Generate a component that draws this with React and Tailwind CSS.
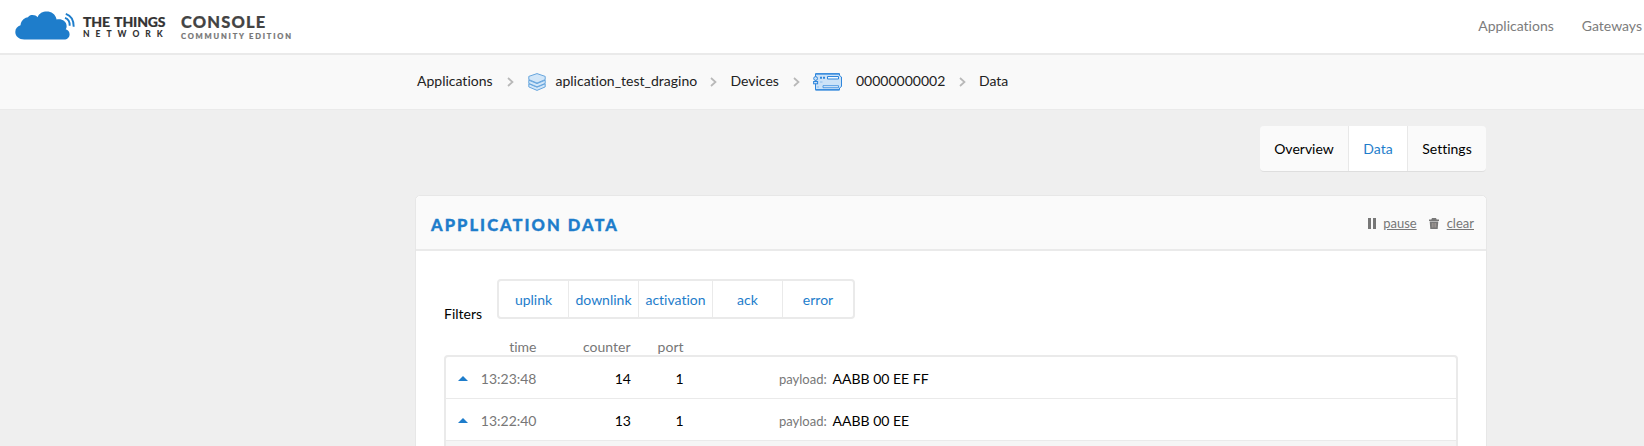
const Chevron = () => (
  <svg className="h-[10px] w-[7px]" viewBox="0 0 7 10" fill="none" stroke="#b8b8b8" strokeWidth="1.7">
    <path d="M1 1l4.5 4L1 9" />
  </svg>
);

const Layers = () => (
  <svg className="h-[18px] w-[18px]" viewBox="0 0 18 18" fill="#d2e6f8" stroke="#66a5dd" strokeWidth="1" strokeLinejoin="round">
    <path d="M.8 10.800v3.100L9 17.400l8.200-3.500v-3.100L9 14.200z" />
    <path d="M.8 7.200v3.200L9 13.800l8.200-3.400V7.200L9 10.600z" />
    <path d="M9 .6L.8 3.400v3.200L9 10l8.200-3.400V3.400z" />
  </svg>
);

const Device = () => (
  <svg className="h-[18px] w-[30px]" viewBox="0 0 30 18" fill="none" stroke="#2f86dc" strokeWidth="1">
    <path d="M2.500.8h24v1.700l2 1.500v9.500l-2 1.500v1.800h-24z" fill="#cce2f7" />
    <path d="M2.500.8h24M2.500 16.800h24" strokeWidth="1.300" />
    <circle cx="2.600" cy="5.500" r="1.900" fill="#cce2f7" />
    <rect x=".6" y="8.500" width="4" height="2.300" fill="#cce2f7" />
    <path d="M7 4.700h2M10 4.700h2" strokeWidth="2" />
    <path d="M14.500 3.500h11v2.500h-11z" fill="#f4f9fe" />
    <path d="M10 12.700h15.500v2H10z" fill="#e3effb" strokeWidth=".8" />
    <path d="M7 9h2.500M4 14h2" strokeWidth=".8" stroke="#7db4ea" />
  </svg>
);

const Cloud = () => (
  <svg className="h-[30px] w-[61px] shrink-0" viewBox="0 0 61 30">
    <path
      fill="#1e7dcb"
      d="M9.300 28.500C4 28.500.300 25.300.300 21c0-3.400 2.200-5.800 5.200-6.700C5.900 9 10.500 6.300 13 6.300c.9-1.700 2.700-2.300 4.400-2.300 2.400 0 4 .9 5.200 2.300C24.200 2.300 27.700.6 31.700.6c4.600 0 8.800 2.600 9.900 8 4.800-1.200 9.800 1.500 10 6.200.1 1.400-.2 2.500-.9 3.400 2.300.6 3.900 2.500 3.900 5 0 3.100-2.300 5.300-5.600 5.300z"
    />
    <g fill="none" stroke="#1e7dcb" strokeWidth="1.900">
      <path d="M50.800 2.800c5 1.700 8 6.500 7.900 13" />
      <path d="M50 6.800c3.300 1.100 4.900 4.200 4.700 8" />
    </g>
  </svg>
);

const Bin = () => (
  <svg className="h-[11px] w-[10px]" viewBox="0 0 10 11">
    <path fill="#777" d="M3 0h4l.7 1.500H10V3H0V1.500h2.300zM.7 3.500h8.600l-.6 7.500H1.300z" />
    <path d="M3.300 5v4.500M5 5v4.500M6.700 5v4.500" stroke="#b5aaa5" strokeWidth=".7" />
  </svg>
);

const filters = [
  ["uplink", "w-[70px]"],
  ["downlink", "w-[70px]"],
  ["activation", "w-[74px]"],
  ["ack", "w-[70px]"],
  ["error", "w-[70px]"],
];

const rows = [
  { time: "13:23:48", counter: 14, port: 1, payload: "AABB 00 EE FF" },
  { time: "13:22:40", counter: 13, port: 1, payload: "AABB 00 EE" },
];

export default function App() {
  return (
    <div className="flex h-[446px] w-[1644px] flex-col overflow-hidden whitespace-nowrap bg-[#efefef] font-['Lato',sans-serif] text-[14px] leading-5 text-black [font-variant-ligatures:none]">
      <header className="flex h-[55px] shrink-0 justify-between border-b-2 border-[#eaeaea] bg-white">
        <div className="flex pl-[15px] pt-[11px]">
          <Cloud />
          <div className="ml-[7px] flex w-[98px] flex-col font-black text-[#333]">
            <span className="mt-[3px] text-[14px] leading-[16px] tracking-[-0.150px] [-webkit-text-stroke:0.2px] [word-spacing:1.500px]">THE THINGS</span>
            <span className="text-[8.500px] leading-[9px] tracking-[6px]">NETWORK</span>
          </div>
          <div className="flex flex-col">
            <span className="mt-[2px] text-[16.500px] font-black leading-[18px] tracking-[1.150px] text-[#444] [-webkit-text-stroke:0.2px]">CONSOLE</span>
            <span className="text-[7.500px] font-black leading-[11px] tracking-[1.830px] text-[#777] [-webkit-text-stroke:0.2px]">COMMUNITY EDITION</span>
          </div>
        </div>
        <nav className="flex gap-[28px] pr-[2px] pt-[16px] text-[#7c7c7c]">
          <a>Applications</a>
          <a>Gateways</a>
        </nav>
      </header>

      <div className="flex h-[55px] shrink-0 items-center border-b border-[#eaeaea] bg-[#f9f9f9] pb-px pl-[417px] text-[#222]">
        <span className="w-[90px] pb-[2px]">Applications</span>
        <span className="w-[21px]"><Chevron /></span>
        <span className="w-[27.500px]"><Layers /></span>
        <span className="w-[154.500px] pb-[2px]">aplication_test_dragino</span>
        <span className="w-[20.500px]"><Chevron /></span>
        <span className="w-[62.500px] pb-[2px]">Devices</span>
        <span className="w-[20px]"><Chevron /></span>
        <span className="w-[43px]"><Device /></span>
        <span className="w-[103px] pb-[2px]">00000000002</span>
        <span className="w-[20px]"><Chevron /></span>
        <span className="pb-[2px]">Data</span>
      </div>

      <main className="ml-[415px] flex w-[1072px] flex-1 flex-col pt-4">
        <div className="mr-px flex h-[46px] w-[226px] shrink-0 self-end overflow-hidden rounded-[4px] border-b border-[#dedede] bg-[#fafafa] text-center leading-[46px]">
          <span className="w-[88px]">Overview</span>
          <span className="w-[60px] border-x border-[#e8e8e8] bg-white text-[#1e7dcb]">Data</span>
          <span className="w-[78px]">Settings</span>
        </div>

        <section className="mt-[23px] flex h-[300px] shrink-0 flex-col rounded-t-[5px] border border-[#e7e7e7] bg-white">
          <div className="flex h-[55px] shrink-0 items-center justify-between rounded-t-[5px] border-b-2 border-[#eaeaea] bg-[#fafafa] pl-[15px] pr-[12px]">
            <h1 className="mt-[4px] text-[16.500px] font-black tracking-[2.050px] text-[#1e7dcb] [-webkit-text-stroke:0.35px]">APPLICATION DATA</h1>
            <div className="flex items-center text-[13px] text-[#777]">
              <span className="mr-[7px] mt-[2px] flex gap-[2px]">
                <i className="h-[11px] w-[3px] bg-[#777]" />
                <i className="h-[11px] w-[3px] bg-[#777]" />
              </span>
              <a className="mr-[12px] underline">pause</a>
              <span className="mr-[8px] mt-px"><Bin /></span>
              <a className="underline">clear</a>
            </div>
          </div>

          <div className="flex h-[68px] shrink-0 pl-[28px] pt-[28px]">
            <span className="w-[53px] pt-[25px]">Filters</span>
            <div className="flex h-[40px] overflow-hidden rounded-[4px] border-2 border-[#eaeaea] text-center leading-[37px] text-[#1e7dcb]">
              {filters.map(([name, width], i) => (
                <span key={name} className={`${width} ${i < 4 ? "border-r border-[#eaeaea]" : ""}`}>{name}</span>
              ))}
            </div>
          </div>

          <div className="flex h-[36px] shrink-0 items-end text-right leading-[16px] text-[#777]">
            <span className="w-[120.500px]">time</span>
            <span className="w-[94px]">counter</span>
            <span className="w-[53px]">port</span>
          </div>

          <div className="ml-[28px] h-[120px] w-[1014px] rounded-[4px] border-2 border-[#eaeaea] bg-[#f5f5f5]">
            {rows.map((row) => (
              <div key={row.time} className="flex h-[42px] items-center border-b border-[#eaeaea] bg-white pt-[3px] first:rounded-t-[3px]">
                <svg className="-mt-[2px] ml-[12px] h-[5px] w-[10px]" viewBox="0 0 10 5"><path d="M0 5L5 0l5 5z" fill="#1e7dcb" /></svg>
                <span className="w-[68.500px] text-right text-[#777]">{row.time}</span>
                <span className="w-[94.500px] text-right">{row.counter}</span>
                <span className="w-[52.500px] text-right">{row.port}</span>
                <span className="ml-[95.500px] w-[53.500px] text-[13px] text-[#777]">payload:</span>
                <span>{row.payload}</span>
              </div>
            ))}
          </div>
        </section>
      </main>
    </div>
  );
}
